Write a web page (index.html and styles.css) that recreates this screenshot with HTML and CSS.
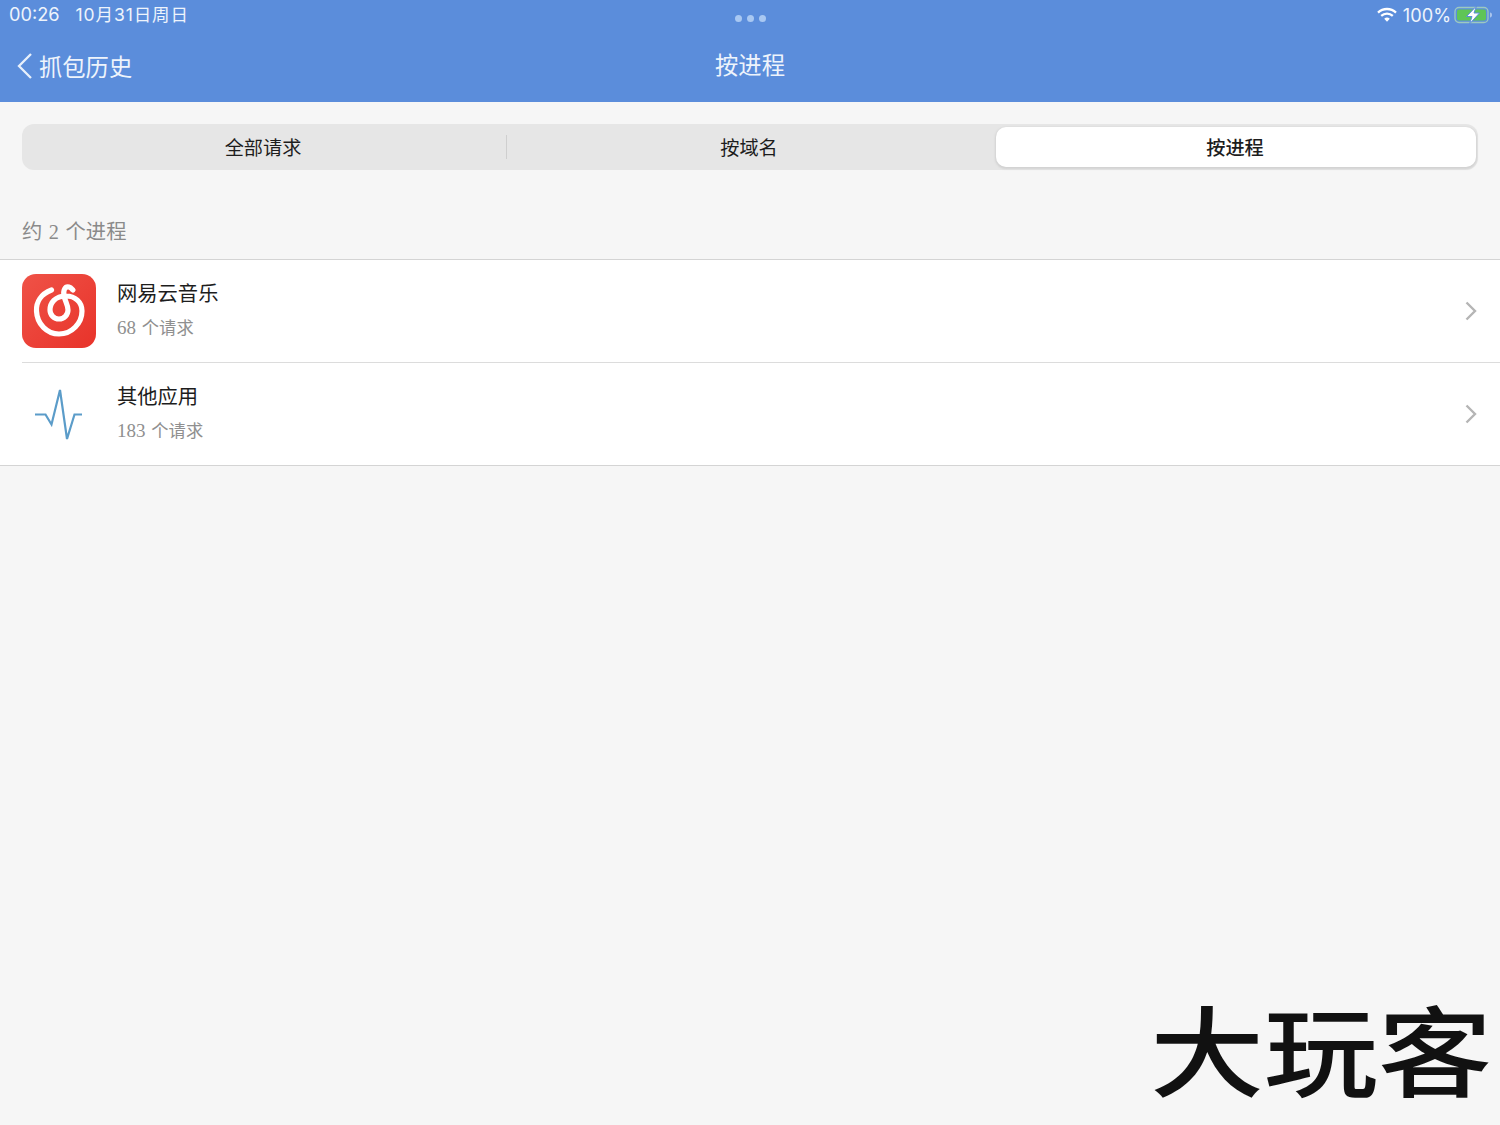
FILE: index.html
```html
<!DOCTYPE html>
<html lang="zh-CN">
<head>
<meta charset="utf-8">
<title>按进程</title>
<link rel="stylesheet" href="styles.css">
</head>
<body>
<header class="header">
  <div class="status">
    <div class="status-left"><span>00:26</span><span class="date">10月31日周日</span></div>
    <div class="dots"><i></i><i></i><i></i></div>
    <div class="status-right">
      <svg class="wifi" width="20" height="16" viewBox="0 0 20 16"><path d="M1 5.600a13 13 0 0 1 18 0" fill="none" stroke="#fff" stroke-width="2.300"/><path d="M4.200 8.900a8.600 8.600 0 0 1 11.600 0" fill="none" stroke="#fff" stroke-width="2.300"/><path d="M7.200 11.700a4.200 4.200 0 0 1 5.600 0L10 14.800z" fill="#fff"/></svg>
      <span class="pct">100%</span>
      <svg class="battery" width="39" height="20" viewBox="0 0 39 20"><rect x="1" y="2.500" width="33" height="15" rx="4" fill="none" stroke="#9cc9c0" stroke-width="1.300"/><rect x="3" y="4.500" width="29" height="11" rx="2" fill="#5fc557"/><path d="M36 7.500c1.500.3 2 1.200 2 2.500s-.5 2.200-2 2.500z" fill="#a9c4ec"/><path d="M22.500 1 12.500 11.500h5.500L15.500 19l10-11h-5.500z" fill="#fff" stroke="#5b8ddb" stroke-width="1"/></svg>
    </div>
  </div>
  <div class="nav">
    <div class="back">
      <svg width="17" height="28" viewBox="0 0 17 28"><path d="M15 2 3 14l12 12" fill="none" stroke="#e8f0fb" stroke-width="2.300"/></svg>
      <span>抓包历史</span>
    </div>
    <div class="title">按进程</div>
  </div>
</header>
<main class="main">
  <div class="segments">
    <div class="segment">全部请求</div>
    <div class="segment segment-mid">按域名</div>
    <div class="segment segment-on">按进程</div>
  </div>
  <div class="section-label">约 2 个进程</div>
  <ul class="list">
    <li class="row">
      <svg class="app-icon" width="74" height="74" viewBox="0 0 74 74"><defs><linearGradient id="red" x1="0" y1="0" x2="1" y2="1"><stop offset="0" stop-color="#ef5247"/><stop offset="1" stop-color="#e8332a"/></linearGradient></defs><rect width="74" height="74" rx="14" fill="url(#red)"/><path d="M29.500 16C19 20 14 28 14.500 37 15 50 25 60 37 60c13 0 23-11 23-23 0-9-7-15-16-15-11 0-16 7-16 14 0 5 4 9 9 9s9-4 9-9c0-5-3-9-4-14-1-6 1-10 5-9 2 .5 3 2 4 3" fill="none" stroke="#fff" stroke-width="5.200" stroke-linecap="round"/></svg>
      <div class="row-body">
        <div class="row-title">网易云音乐</div>
        <div class="row-sub"><span class="num">68</span> 个请求</div>
      </div>
      <svg class="chev" width="14" height="22" viewBox="0 0 14 22"><path d="M2.500 2.500 11 11l-8.500 8.500" fill="none" stroke="#b5b5b5" stroke-width="2.400"/></svg>
    </li>
    <li class="row">
      <svg class="app-icon" width="74" height="74" viewBox="0 0 74 74"><path d="M13 37.500h10.500l6 10L38 13l7 49 7.500-24.500H60" fill="none" stroke="#5b9cc9" stroke-width="2.200" stroke-linejoin="miter"/></svg>
      <div class="row-body">
        <div class="row-title">其他应用</div>
        <div class="row-sub"><span class="num">183</span> 个请求</div>
      </div>
      <svg class="chev" width="14" height="22" viewBox="0 0 14 22"><path d="M2.500 2.500 11 11l-8.500 8.500" fill="none" stroke="#b5b5b5" stroke-width="2.400"/></svg>
    </li>
  </ul>
</main>
<div class="watermark">大玩客</div>
</body>
</html>
```
FILE: styles.css
```css
* { box-sizing: border-box; }
html, body { margin: 0; padding: 0; }
body {
  width: 1500px;
  height: 1125px;
  overflow: hidden;
  position: relative;
  background: #f6f6f6;
  font-family: "Noto Sans CJK SC", sans-serif;
  color: #1d1d1d;
}
.header {
  height: 102px;
  background: #5b8ddb;
  color: #eef4fc;
}
.status {
  height: 29px;
  padding: 0 7px 0 9px;
  display: grid;
  grid-template-columns: 1fr auto 1fr;
  align-items: center;
  font-family: "Inter", "Noto Sans CJK SC", sans-serif;
  font-size: 18.200px;
  line-height: 24px;
}
.status-left { display: flex; gap: 16px; align-items: baseline; }
.date { letter-spacing: .9px; font-size: 17.500px; }
.dots { display: flex; gap: 5px; padding-top: 7px; margin-left: -2px; }
.dots i { width: 7px; height: 7px; border-radius: 50%; background: #a9c8f2; }
.status-right { display: flex; justify-content: flex-end; align-items: center; gap: 6px; }
.status-right .battery { margin-left: -3px; }
.nav {
  height: 72px;
  display: grid;
  grid-template-columns: 1fr auto 1fr;
  align-items: center;
  padding: 0 16px;
  font-size: 23.300px;
}
.back { display: flex; align-items: center; gap: 6px; margin-top: 2px; }
.title { margin-top: -3px; }
.main { padding-top: 22px; }
.segments {
  margin: 0 22px;
  width: 1456px;
  height: 46px;
  background: #e6e6e6;
  border-radius: 12px;
  display: grid;
  grid-template-columns: 484px 490px 482px;
  font-size: 19.200px;
  line-height: 24px;
}
.segment { display: flex; align-items: center; justify-content: center; padding-bottom: 1px; }
.segment:first-child { padding-right: 2px; }
.segment-mid { position: relative; padding-right: 4px; }
.segment-mid::before {
  content: "";
  position: absolute;
  left: 0;
  top: 11px;
  height: 24px;
  width: 1px;
  background: #cfcfcf;
}
.segment-on {
  background: #fff;
  border-radius: 10px;
  margin: 3px 2px 3px 0;
  box-shadow: 0 1px 2px 1px #d2d2d2;
  font-weight: 500;
  padding-right: 2px;
}
.section-label {
  padding: 48px 22px 0;
  height: 89px;
  line-height: 28px;
  font-size: 20.300px;
  word-spacing: 1.500px;
  color: #8a8a8a;
  font-family: "Liberation Serif", "Noto Sans CJK SC", serif;
}
.list {
  list-style: none;
  margin: 0;
  padding: 0;
  background: #fff;
  border-top: 1px solid #d4d4d4;
  border-bottom: 1px solid #d4d4d4;
}
.row {
  height: 103px;
  margin-left: 22px;
  padding-right: 22px;
  display: flex;
  align-items: center;
  gap: 21px;
}
.row + .row { border-top: 1px solid #dcdcdc; }
.row:first-child { height: 102px; }
.row-body { flex: 1; padding-bottom: 3px; }
.row-title { font-size: 20.300px; line-height: 28px; color: #1d1d1d; }
.row-sub {
  font-size: 17.300px;
  line-height: 24px;
  margin-top: 10px;
  color: #8f8f8f;
  word-spacing: 1.500px;
  font-family: "Liberation Serif", "Noto Sans CJK SC", serif;
}
.num { font-size: 19px; }
.watermark {
  position: absolute;
  right: 8px;
  top: 994px;
  font-size: 114px;
  line-height: 124px;
  color: #111;
  font-weight: 500;
  transform: scaleY(.86);
  transform-origin: top;
}
```
